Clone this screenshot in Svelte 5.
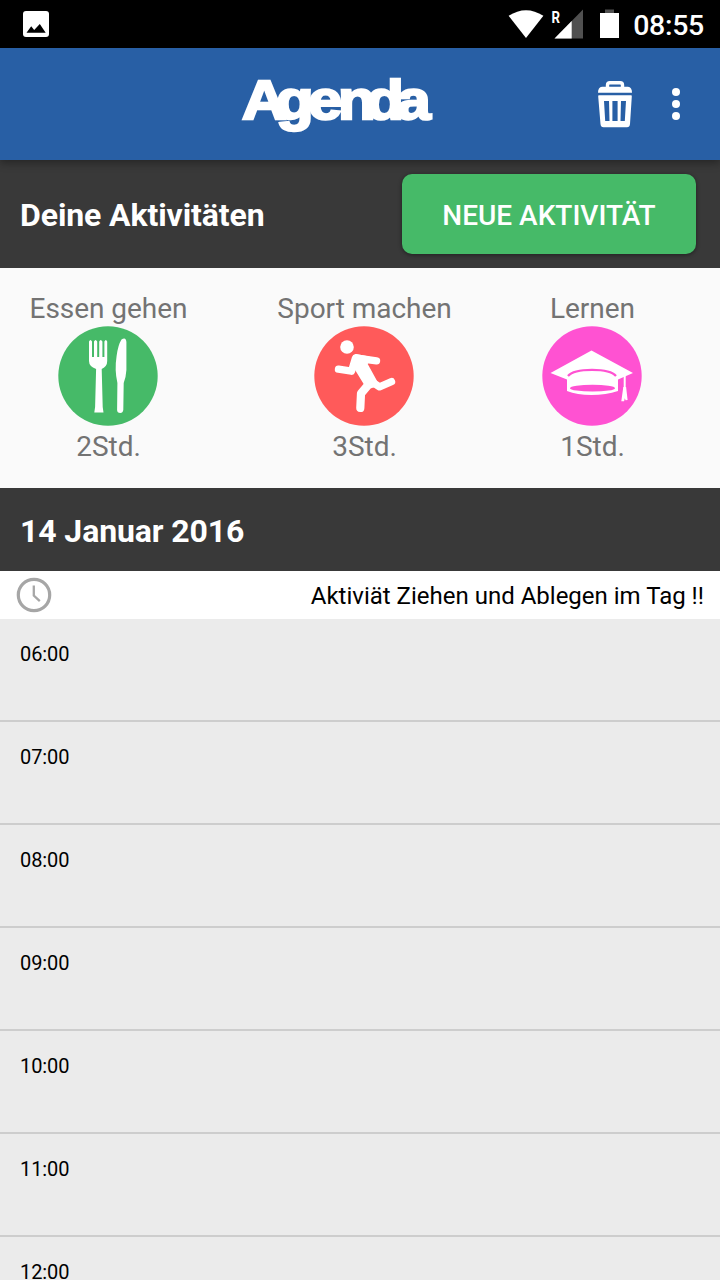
<script>
  const activities = [
    { name: 'Essen gehen', time: '2Std.', icon: 'food', color: '#46ba68' },
    { name: 'Sport machen', time: '3Std.', icon: 'run', color: '#ff5a5a' },
    { name: 'Lernen', time: '1Std.', icon: 'study', color: '#ff52d2' }
  ];
  const hours = ['06:00', '07:00', '08:00', '09:00', '10:00', '11:00', '12:00'];
</script>

<div class="screen">
  <div class="status">
    <svg class="picture" width="26" height="26" viewBox="0 0 26 26">
      <rect width="26" height="26" rx="3" fill="#fff" />
      <path d="M3.500 21.700 8.200 15.300l3 3.800L16.800 13l5.900 8.700z" fill="#000" />
    </svg>
    <svg class="signals" width="112" height="32" viewBox="508 8 112 32">
      <path d="M508.6 15.8Q526 4.500 543.4 15.8L526 38z" fill="#fff" />
      <path d="M583 9.500V38.500H554.500z" fill="#505050" />
      <path d="M571.700 21V38.500H554.500z" fill="#fff" />
      <text x="551.500" y="22.500" font-size="16" font-weight="700" fill="#fff" textLength="8.500" lengthAdjust="spacingAndGlyphs">R</text>
      <path d="M605 9.500h9v4h-9z" fill="#505050" />
      <path d="M600 13h19v25h-19z" fill="#fff" />
    </svg>
    <span class="clock">08:55</span>
  </div>

  <header>
    <svg class="logo" width="200" height="66" viewBox="236 70 200 66">
      <text transform="translate(242 117.500) scale(1.1 1)" x="0 31 60 87.300 113 140.500">Agenda</text>
    </svg>
    <svg class="trash" width="36" height="48" viewBox="0 0 36 48">
      <path d="M10.500 7.500V5q0-2.300 2.300-2.300h10.400q2.300 0 2.300 2.300v2.500" fill="none" stroke="#fff" stroke-width="3.400" />
      <path d="M5 6.800h26q4 .3 4 6H1q0-5.700 4-6z" fill="#fff" />
      <path fill-rule="evenodd" d="M2 15.200h32q1 0 .8 1.300L33 44q-.3 3.300-3 3.300H6.500Q3.800 47.300 3.500 44L1.200 16.500Q1 15.200 2 15.200zM7 21l1.200 20h4.300L12 21zM15.400 21v20h5.200V21zM24 21l-.5 20h4.300l1.200-20z" fill="#fff" />
    </svg>
    <svg class="more" width="8" height="34" viewBox="0 0 8 34">
      <circle cx="4" cy="5" r="4" /><circle cx="4" cy="17" r="4" /><circle cx="4" cy="29" r="4" />
    </svg>
  </header>

  <section class="bar">
    <h2>Deine Aktivitäten</h2>
    <button>NEUE AKTIVITÄT</button>
  </section>

  <section class="activities">
    {#each activities as a}
      <div class="activity">
        <span>{a.name}</span>
        <svg width="100" height="100" viewBox="0 0 100 100">
          <circle cx="50" cy="50" r="49.700" fill={a.color} />
          {#if a.icon === 'food'}
            <path d="M31 15.500q1.500-3 3 0V31h2V15.500q1.500-3 3.200 0V31h2V15.500q1.500-3 3.200 0V31h2V15.500q1.500-3 2.800 0V35q0 5.500-5.500 8l1 38 .8 5.500H36.300l.8-5.500 1-38Q31 40.500 31 35z" fill="#fff" />
            <path d="M63.500 13.500Q68 10.500 68.400 16v28q-.4 7-2.700 13l-.4 27q-.5 3-3 3-3.200 0-3.200-3l.3-27q-3-13-.8-27 1.400-11 4.900-16.500z" fill="#fff" />
          {:else if a.icon === 'run'}
            <g fill="none" stroke="#fff" stroke-linecap="round" stroke-linejoin="round">
              <circle cx="33" cy="21" r="6.800" fill="#fff" stroke="none" />
              <path d="M24.500 43.200 37.500 45.200 41.500 32 62.500 34.800" stroke-width="7.400" />
              <path d="M55 54 65.500 60.800 77.500 55.600" stroke-width="7.400" />
              <path d="M55 58 47 67.500 46.300 82" stroke-width="8.200" />
              <path d="M42 29.500Q38 33 41 41L52 59q6 4 11-1L52 38 55 32z" fill="#fff" stroke-width="3" />
            </g>
          {:else}
            <path d="M49.500 24.500 91 47 76 53.500V65q-12 4-26.500 4T25 65V53.500L8.500 47z" fill="#fff" />
            <path d="M26 50Q31 43.800 50 43.800T74 50" fill="none" stroke={a.color} stroke-width="2.200" />
            <ellipse cx="50.500" cy="62.200" rx="22.500" ry="3.400" fill={a.color} />
            <path d="M82.700 50v14" stroke="#fff" stroke-width="2" />
            <path d="M81.300 61h2.800l1.500 13-2 .3-.8-2-.7 3H79.300z" fill="#fff" />
          {/if}
        </svg>
        <span class="time">{a.time}</span>
      </div>
    {/each}
  </section>

  <section class="date"><h2>14 Januar 2016</h2></section>

  <section class="hint">
    <svg width="36" height="36" viewBox="0 0 36 36" fill="none" stroke="#a6a6a6">
      <circle cx="18" cy="18" r="15.700" stroke-width="3.200" />
      <path d="M17.800 8.500v10l6 5.700" stroke-width="2.300" />
    </svg>
    <span>Aktiviät Ziehen und Ablegen im Tag !!</span>
  </section>

  <section class="hours">
    {#each hours as h}
      <div class="hour">{h}</div>
    {/each}
  </section>
</div>

<style>
  :global(body) { overflow: hidden; }
  .screen {
    width: 720px;
    height: 1280px;
    overflow: hidden;
    display: flex;
    flex-direction: column;
    font-family: Roboto, sans-serif;
    background: #fafafa;
  }
  .screen > * { flex-shrink: 0; box-sizing: border-box; }
  .status {
    height: 48px;
    background: #000;
    color: #fff;
    display: flex;
    align-items: center;
    padding: 0 16px 0 23px;
  }
  .signals { margin-left: auto; }
  .clock { font-size: 28.500px; font-weight: 500; line-height: 32px; margin: 4px 0 0 13px; letter-spacing: -.3px; }
  header {
    height: 112px;
    background: #285fa5;
    display: flex;
    align-items: center;
    padding: 0 40px 0 236px;
    box-shadow: 0 3px 8px rgba(0, 0, 0, .35);
    z-index: 1;
  }
  .logo text {
    font: 700 56px "Liberation Sans", sans-serif;
    fill: #fff;
    stroke: #fff;
    stroke-width: 2.500px;
    stroke-linejoin: miter;
    stroke-miterlimit: 2;
  }
  .trash { margin-left: auto; }
  .more { margin-left: 39px; fill: #fff; }
  .bar {
    height: 108px;
    background: #393939;
    display: flex;
    justify-content: space-between;
    align-items: center;
    padding: 0 24px 0 20px;
  }
  h2 { margin: 0; color: #fff; font-size: 32px; line-height: 38px; font-weight: 700; letter-spacing: -.1px; }
  .bar h2 { margin-top: 1px; }
  button {
    width: 294px;
    height: 80px;
    border: 0;
    border-radius: 10px;
    padding: 2px 0 0;
    background: #46ba68;
    color: #fff;
    font: 500 28px Roboto, sans-serif;
    box-shadow: 0 1px 4px rgba(0, 0, 0, .45);
  }
  .activities {
    height: 220px;
    padding: 24px 0 0 30px;
    display: flex;
    gap: 91px;
    color: #737373;
    font-size: 28px;
    line-height: 34px;
    letter-spacing: -.04px;
  }
  .activity { display: flex; flex-direction: column; align-items: center; }
  .activity:first-child { width: 156px; }
  .activity:nth-child(2) { width: 174px; }
  .activity span { white-space: nowrap; padding-left: 1px; }
  .time { margin-top: 4px; }
  .date { height: 83px; background: #393939; display: flex; align-items: center; padding: 2px 20px 0; }
  .hint {
    height: 48px;
    background: #fff;
    display: flex;
    align-items: center;
    justify-content: space-between;
    padding: 0 16px;
    font-size: 24px;
    color: #000;
  }
  .hint span { margin-top: 2px; }
  .hour {
    height: 103px;
    box-sizing: border-box;
    padding: 23px 20px 0;
    background: #ebebeb;
    border-bottom: 2px solid #cdcdcd;
    color: #000;
    font-size: 20px;
    line-height: 24px;
    letter-spacing: -.1px;
  }
</style>
